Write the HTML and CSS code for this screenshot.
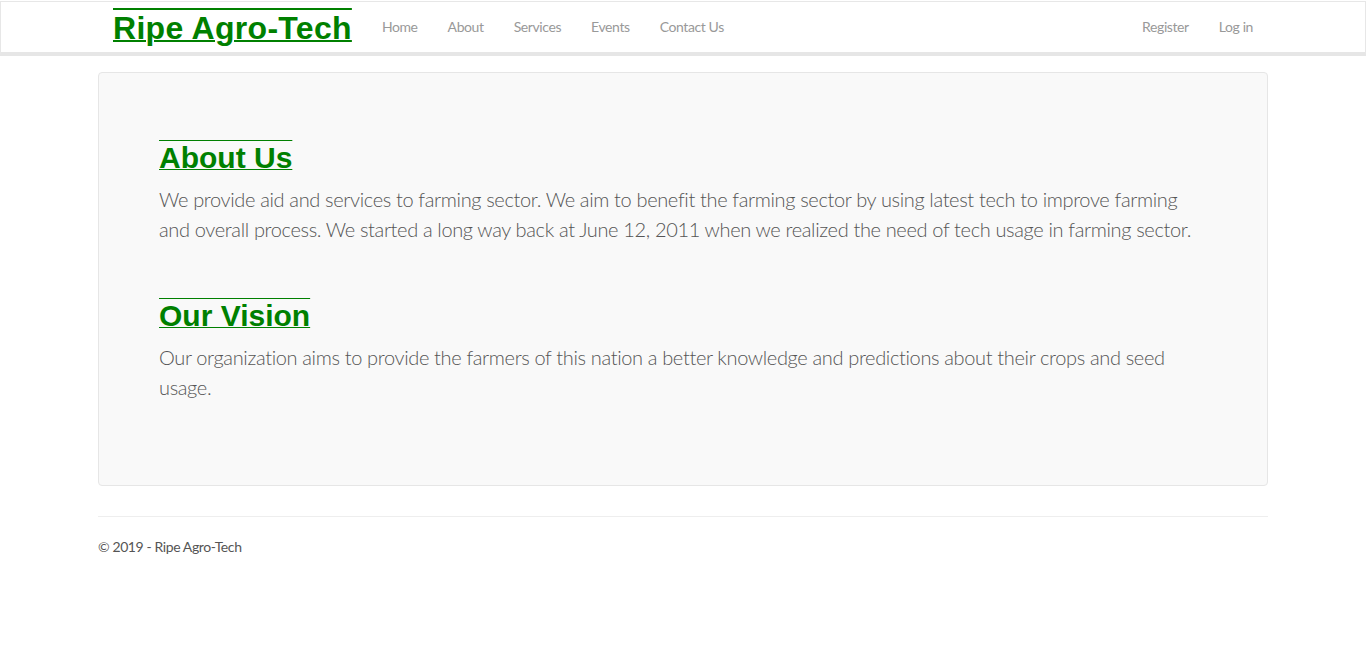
FILE: index.html
```html
<!DOCTYPE html>
<html lang="en">
<head>
<meta charset="utf-8">
<title>About - Ripe Agro-Tech</title>
<link rel="stylesheet" href="styles.css">
</head>
<body>
<nav class="navbar">
  <div class="container nav-inner">
    <a class="brand" href="#">Ripe Agro-Tech</a>
    <ul class="nav">
      <li><a href="#">Home</a></li>
      <li><a href="#">About</a></li>
      <li><a href="#">Services</a></li>
      <li><a href="#">Events</a></li>
      <li><a href="#">Contact Us</a></li>
    </ul>
    <ul class="nav nav-right">
      <li><a href="#">Register</a></li>
      <li><a href="#">Log in</a></li>
    </ul>
  </div>
</nav>
<main class="container body-content">
  <section class="jumbotron">
    <h2 class="title">About Us</h2>
    <p class="lead">We provide aid and services to farming sector. We aim to benefit the farming sector by using latest tech to improve farming and overall process. We started a long way back at June 12, 2011 when we realized the need of tech usage in farming sector.</p>
    <h2 class="title">Our Vision</h2>
    <p class="lead">Our organization aims to provide the farmers of this nation a better knowledge and predictions about their crops and seed usage.</p>
  </section>
  <hr class="divider">
  <footer class="footer">
    <p>&copy; 2019 - Ripe Agro-Tech</p>
  </footer>
</main>
</body>
</html>
```
FILE: styles.css
```css
* { box-sizing: border-box; }
html, body { margin: 0; padding: 0; }
body {
  font-family: "Source Sans Pro", Lato, "Open Sans", sans-serif;
  font-size: 14px;
  line-height: 20px;
  letter-spacing: -0.4px;
  color: #555555;
  background: #ffffff;
}
.container {
  width: 1170px;
  margin: 0 auto;
  padding: 0 15px;
}
.navbar {
  margin-top: 1px;
  height: 55px;
  border: 1px solid #e7e7e7;
  border-bottom: 4px solid #e6e6e6;
  background: #ffffff;
}
.nav-inner {
  display: flex;
  align-items: center;
  height: 50px;
}
.brand {
  font-family: "Liberation Sans", Arial, sans-serif;
  font-weight: bold;
  font-size: 32px;
  line-height: 36px;
  letter-spacing: 0.3px;
  color: #008000;
  text-decoration: underline overline;
  text-decoration-thickness: 2px;
  padding-right: 15px;
  margin-top: 2px;
}
.nav {
  list-style: none;
  margin: 0;
  padding: 0;
  display: flex;
}
.nav a {
  display: block;
  padding: 15px;
  line-height: 20px;
  color: #999999;
  text-decoration: none;
}
.nav-right {
  margin-left: auto;
  margin-right: -15px;
}
.body-content {
  padding: 16px 0 0;
}
.jumbotron {
  background: #f9f9f9;
  border: 1px solid #e6e6e6;
  border-radius: 4px;
  padding: 48px 60px;
  margin-bottom: 30px;
}
.title {
  font-family: "Liberation Sans", Arial, sans-serif;
  font-weight: bold;
  font-size: 30px;
  line-height: 33px;
  letter-spacing: 0;
  color: #008000;
  text-decoration: underline overline;
  text-decoration-thickness: 1px;
  margin: 20px 0 10px;
}
.lead + .title {
  margin-top: 55px;
}
.lead {
  font-size: 20px;
  font-weight: 300;
  line-height: 30px;
  letter-spacing: -0.35px;
  margin: 0 0 35px;
}
.divider {
  border: 0;
  border-top: 1px solid #eeeeee;
  margin: 0 0 20px;
}
.footer p {
  margin: 0;
}
```
